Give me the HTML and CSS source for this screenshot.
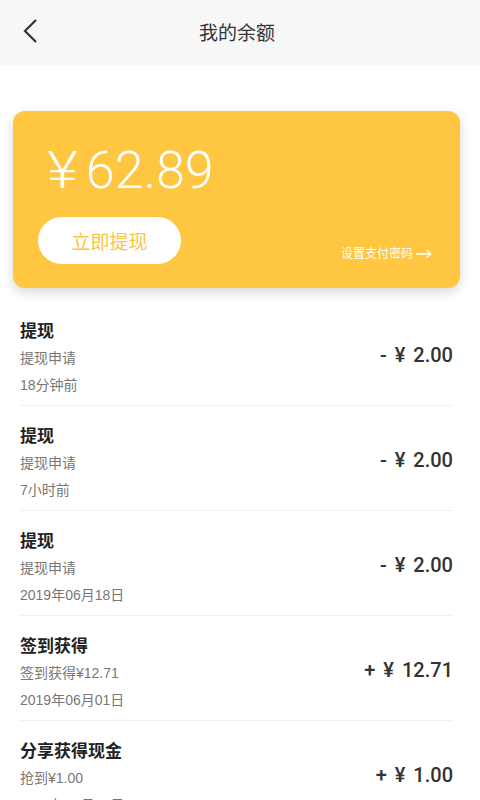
FILE: index.html
```html
<!DOCTYPE html>
<html>
<head>
    <title>我的余额</title>
    <link rel="stylesheet" href="styles.css">
</head>
<body>
    <div class="header">
        <svg class="back" width="16" height="26" viewBox="0 0 16 26">
            <path d="M14 2 L3 13 L14 24" fill="none" stroke="#333" stroke-width="2.2"/>
        </svg>
        <div class="title">我的余额</div>
    </div>

    <div class="card">
        <div class="balance"><span class="yen">¥</span>62.89</div>
        <div class="card-row">
            <div class="btn">立即提现</div>
            <div class="pwd">设置支付密码
                <svg width="16" height="10" viewBox="0 0 16 10">
                    <path d="M0 5 H14.5 M10.5 1 L14.8 5 L10.5 9" fill="none" stroke="#fff" stroke-width="1.3"/>
                </svg>
            </div>
        </div>
    </div>

    <div class="list">
        <div class="item">
            <div class="info">
                <div class="name">提现</div>
                <div class="sub">提现申请</div>
                <div class="sub">18分钟前</div>
            </div>
            <div class="amount">- ¥ 2.00</div>
        </div>
        <div class="item">
            <div class="info">
                <div class="name">提现</div>
                <div class="sub">提现申请</div>
                <div class="sub">7小时前</div>
            </div>
            <div class="amount">- ¥ 2.00</div>
        </div>
        <div class="item">
            <div class="info">
                <div class="name">提现</div>
                <div class="sub">提现申请</div>
                <div class="sub">2019年06月18日</div>
            </div>
            <div class="amount">- ¥ 2.00</div>
        </div>
        <div class="item">
            <div class="info">
                <div class="name">签到获得</div>
                <div class="sub">签到获得¥12.71</div>
                <div class="sub">2019年06月01日</div>
            </div>
            <div class="amount">+ ¥ 12.71</div>
        </div>
        <div class="item">
            <div class="info">
                <div class="name">分享获得现金</div>
                <div class="sub">抢到¥1.00</div>
                <div class="sub">2019年05月31日</div>
            </div>
            <div class="amount">+ ¥ 1.00</div>
        </div>
    </div>
</body>
</html>
```

FILE: styles.css
```css
body { margin: 0; background: #fff; font-family: "Liberation Sans", "Noto Sans CJK SC", sans-serif; color: #222; overflow: hidden; }
.header { height: 65px; background: #f7f7f7; display: flex; align-items: center; justify-content: center; position: relative; }
.back { position: absolute; left: 22px; top: 18px; }
.title { font-size: 19px; color: #333; margin: -3px 6px 0 0; }
.card { margin: 46px 20px 0 13px; padding: 30px 28px 24px 25px; background: #fec641; border-radius: 12px; box-shadow: 0 4px 12px rgba(0, 0, 0, 0.16); }
.balance { font-family: Roboto, sans-serif; font-weight: 300; font-size: 52px; line-height: 60px; color: #fff; padding-left: 9px; }
.yen { display: inline-block; margin-right: 12px; transform: scaleX(1.15); transform-origin: left; }
.card-row { display: flex; justify-content: space-between; align-items: flex-end; margin-top: 16px; }
.btn { width: 143px; height: 47px; border-radius: 24px; background: #fff; color: #fcc540; font-size: 19px; display: flex; align-items: center; justify-content: center; font-family: "Noto Sans CJK SC", sans-serif; }
.pwd { color: #fff; font-size: 12px; line-height: 16px; margin-bottom: 2px; display: flex; align-items: center; gap: 3px; }
.list { margin: 13px 27px 0 20px; }
.item { display: flex; justify-content: space-between; align-items: center; padding: 18px 0 6px; border-bottom: 1px solid #f0f0f0; }
.name { font-size: 17px; font-weight: bold; line-height: 26px; color: #222; }
.sub { font-size: 14px; line-height: 27px; color: #777; }
.amount { font-family: Roboto, sans-serif; font-weight: 500; font-size: 20px; color: #333; word-spacing: 3px; margin-bottom: 8px; }
```
